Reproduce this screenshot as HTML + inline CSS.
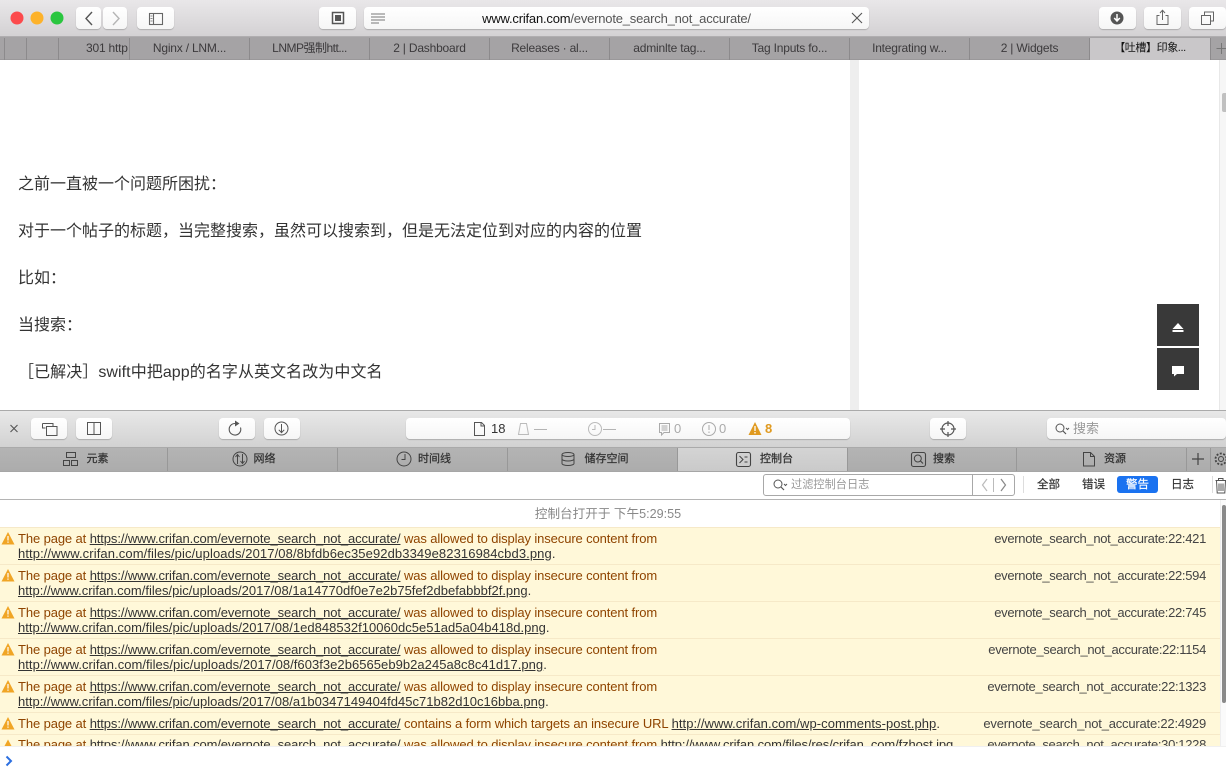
<!DOCTYPE html>
<html lang="zh">
<head>
<meta charset="utf-8">
<style>
html,body{margin:0;padding:0;width:1226px;height:776px;overflow:hidden;background:#fff}
body{position:relative;font-family:"Liberation Sans","Noto Sans CJK SC",sans-serif;color:#333}
div,span.a{position:absolute;box-sizing:border-box}
.btn{background:linear-gradient(#fff,#f6f6f6);border-radius:4px;box-shadow:0 1px 1px rgba(0,0,0,.2)}
.tab{top:38px;height:22px;border-right:1px solid #8c8a8c;text-align:center;font-size:12px;letter-spacing:-.2px;line-height:20px;color:#3c3a3c;white-space:nowrap;overflow:hidden}
.dt{top:448px;height:23px;border-right:1px solid #989898;text-align:center;font-size:11px;-webkit-text-stroke:.25px #333;line-height:23px;color:#333;white-space:nowrap}
.p{left:18px;font-size:16px;line-height:24px;color:#333;white-space:nowrap}
.row{left:0;width:1220px;background:#fff8d9;border-bottom:1px solid #f6e9c8}
.l{left:18px;font-size:13px;line-height:15px;color:#8f4400;white-space:nowrap;letter-spacing:-.11px}
.l u{color:#333}
.r{right:20px;left:auto;font-size:13px;line-height:15px;color:#444;white-space:nowrap;letter-spacing:-.31px}
.f{top:478px;font-size:11.5px;-webkit-text-stroke:.2px #333;line-height:15px;color:#333;white-space:nowrap}
</style>
</head>
<body>
<!-- title bar -->
<div style="left:0;top:0;width:1226px;height:37px;background:linear-gradient(#e9e7e9,#d3d1d3)"></div>
<div style="left:0;top:36px;width:1226px;height:1px;background:#b0aeb0"></div>
<div class="btn" style="left:76px;top:7px;width:25px;height:22px"></div>
<div class="btn" style="left:103px;top:7px;width:24px;height:22px"></div>
<div class="btn" style="left:137px;top:7px;width:37px;height:22px"></div>
<div class="btn" style="left:319px;top:7px;width:37px;height:22px"></div>
<div class="btn" style="left:364px;top:7px;width:505px;height:22px"></div>
<div class="btn" style="left:1099px;top:7px;width:37px;height:22px"></div>
<div class="btn" style="left:1144px;top:7px;width:37px;height:22px"></div>
<div class="btn" style="left:1189px;top:7px;width:37px;height:22px"></div>
<div style="left:364px;top:8px;width:505px;height:21px;text-align:center;font-size:13px;letter-spacing:-.2px;line-height:21px;color:#555;white-space:nowrap"><span style="color:#111">www.crifan.com</span>/evernote_search_not_accurate/</div>

<!-- tab strip -->
<div style="left:0;top:37px;width:1226px;height:23px;background:#a5a3a5;border-bottom:1px solid #9a989a"></div>
<div class="tab" style="left:0;width:5px"></div>
<div class="tab" style="left:5px;width:22px"></div>
<div class="tab" style="left:27px;width:32px"></div>
<div class="tab" style="left:59px;width:71px;text-align:left;padding-left:27px">301 http</div>
<div class="tab" style="left:130px;width:120px">Nginx / LNM...</div>
<div class="tab" style="left:250px;width:120px;letter-spacing:-.5px">LNMP强制htt...</div>
<div class="tab" style="left:370px;width:120px">2 | Dashboard</div>
<div class="tab" style="left:490px;width:120px">Releases · al...</div>
<div class="tab" style="left:610px;width:120px">adminlte tag...</div>
<div class="tab" style="left:730px;width:120px">Tag Inputs fo...</div>
<div class="tab" style="left:850px;width:120px">Integrating w...</div>
<div class="tab" style="left:970px;width:120px">2 | Widgets</div>
<div class="tab" style="left:1090px;width:121px;background:#c9c7c9;color:#111;font-size:11px;letter-spacing:-.4px">【吐槽】印象...</div>

<!-- page -->
<div style="left:850px;top:60px;width:9px;height:350px;background:#eeeeee"></div>
<div style="left:1219px;top:60px;width:7px;height:350px;background:#f6f6f6;border-left:1px solid #e8e8e8"></div>
<div style="left:1222px;top:93px;width:4px;height:19px;background:#c0c0c0;border-radius:2px 0 0 2px"></div>
<div class="p" style="top:173px">之前一直被一个问题所困扰：</div>
<div class="p" style="top:220px">对于一个帖子的标题，当完整搜索，虽然可以搜索到，但是无法定位到对应的内容的位置</div>
<div class="p" style="top:267px">比如：</div>
<div class="p" style="top:314px">当搜索：</div>
<div class="p" style="top:361px;left:18px;letter-spacing:.07px">［已解决］swift中把app的名字从英文名改为中文名</div>
<div style="left:1157px;top:304px;width:42px;height:42px;background:#393939"></div>
<div style="left:1157px;top:348px;width:42px;height:42px;background:#393939"></div>

<!-- devtools toolbar -->
<div style="left:0;top:410px;width:1226px;height:38px;background:linear-gradient(#e8e8e8,#d2d2d2);border-top:1px solid #aaa;border-bottom:1px solid #aaa"></div>
<div class="btn" style="left:31px;top:418px;width:36px;height:21px"></div>
<div class="btn" style="left:76px;top:418px;width:36px;height:21px"></div>
<div class="btn" style="left:219px;top:418px;width:36px;height:21px"></div>
<div class="btn" style="left:264px;top:418px;width:36px;height:21px"></div>
<div class="btn" style="left:406px;top:418px;width:444px;height:21px"></div>
<div class="btn" style="left:930px;top:418px;width:36px;height:21px"></div>
<div class="btn" style="left:1047px;top:418px;width:179px;height:21px"></div>
<div style="left:491px;top:421px;font-size:13px;line-height:16px;color:#333">18</div>
<div style="left:534px;top:421px;font-size:13px;line-height:16px;color:#aaa">—</div>
<div style="left:603px;top:421px;font-size:13px;line-height:16px;color:#aaa">—</div>
<div style="left:674px;top:421px;font-size:13px;line-height:16px;color:#aaa">0</div>
<div style="left:719px;top:421px;font-size:13px;line-height:16px;color:#aaa">0</div>
<div style="left:765px;top:421px;font-size:13px;line-height:16px;color:#e09a20;font-weight:bold">8</div>
<div style="left:1073px;top:420px;font-size:13px;line-height:17px;color:#999">搜索</div>

<!-- devtools tabs -->
<div style="left:0;top:448px;width:1226px;height:23px;background:linear-gradient(#b4b4b4,#acacac)"></div>
<div class="dt" style="left:0;width:168px;padding-left:28px">元素</div>
<div class="dt" style="left:168px;width:170px;padding-left:24px">网络</div>
<div class="dt" style="left:338px;width:170px;padding-left:24px">时间线</div>
<div class="dt" style="left:508px;width:170px;padding-left:28px">储存空间</div>
<div class="dt" style="left:678px;width:170px;background:linear-gradient(#d4d4d4,#cacaca);padding-left:28px">控制台</div>
<div class="dt" style="left:848px;width:169px;padding-left:24px">搜索</div>
<div class="dt" style="left:1017px;width:170px;padding-left:27px">资源</div>
<div class="dt" style="left:1187px;width:24px"></div>

<!-- filter bar -->
<div style="left:0;top:471px;width:1226px;height:29px;background:#fff;border-top:1px solid #a6a6a6;border-bottom:1px solid #b4b4b4"></div>
<div style="left:763px;top:474px;width:252px;height:22px;border:1px solid #a8a8a8;border-radius:3px;background:#fff"></div>
<div style="left:972px;top:474px;width:1px;height:22px;background:#a8a8a8"></div>
<div style="left:791px;top:478px;font-size:11.2px;line-height:15px;color:#999;white-space:nowrap">过滤控制台日志</div>
<div style="left:1023px;top:476px;width:1px;height:17px;background:#ddd"></div>
<div class="f" style="left:1037px">全部</div>
<div class="f" style="left:1082px">错误</div>
<div style="left:1117px;top:476px;width:41px;height:17px;background:#1a72f0;border-radius:3px"></div>
<div class="f" style="left:1126px;color:#fff;-webkit-text-stroke:.2px #fff">警告</div>
<div class="f" style="left:1171px">日志</div>
<div style="left:1212px;top:476px;width:1px;height:17px;background:#ddd"></div>

<!-- console -->
<div style="left:0;top:500px;width:1226px;height:27px;background:#fff;text-align:center;font-size:12.6px;line-height:28px;color:#888;white-space:nowrap"><span style="position:relative;left:-5px">控制台打开于 下午5:29:55</span></div>
<div style="left:0;top:527px;width:1220px;height:1px;background:#f6e9c8"></div>

<div class="row" style="top:528px;height:37px"></div>
<div class="row" style="top:565px;height:37px"></div>
<div class="row" style="top:602px;height:37px"></div>
<div class="row" style="top:639px;height:37px"></div>
<div class="row" style="top:676px;height:37px"></div>
<div class="row" style="top:713px;height:22px"></div>
<div class="row" style="top:735px;height:12px;border:0"></div>

<div class="l" style="top:531px">The page at <u>https://www.crifan.com/evernote_search_not_accurate/</u> was allowed to display insecure content from</div>
<div class="l" style="top:546px;letter-spacing:.1px"><u>http://www.crifan.com/files/pic/uploads/2017/08/8bfdb6ec35e92db3349e82316984cbd3.png</u><span style="color:#333">.</span></div>
<div class="r" style="top:531px">evernote_search_not_accurate:22:421</div>

<div class="l" style="top:568px">The page at <u>https://www.crifan.com/evernote_search_not_accurate/</u> was allowed to display insecure content from</div>
<div class="l" style="top:583px;letter-spacing:.01px"><u>http://www.crifan.com/files/pic/uploads/2017/08/1a14770df0e7e2b75fef2dbefabbbf2f.png</u><span style="color:#333">.</span></div>
<div class="r" style="top:568px">evernote_search_not_accurate:22:594</div>

<div class="l" style="top:605px">The page at <u>https://www.crifan.com/evernote_search_not_accurate/</u> was allowed to display insecure content from</div>
<div class="l" style="top:620px;letter-spacing:.02px"><u>http://www.crifan.com/files/pic/uploads/2017/08/1ed848532f10060dc5e51ad5a04b418d.png</u><span style="color:#333">.</span></div>
<div class="r" style="top:605px">evernote_search_not_accurate:22:745</div>

<div class="l" style="top:642px">The page at <u>https://www.crifan.com/evernote_search_not_accurate/</u> was allowed to display insecure content from</div>
<div class="l" style="top:657px;letter-spacing:.04px"><u>http://www.crifan.com/files/pic/uploads/2017/08/f603f3e2b6565eb9b2a245a8c8c41d17.png</u><span style="color:#333">.</span></div>
<div class="r" style="top:642px">evernote_search_not_accurate:22:1154</div>

<div class="l" style="top:679px">The page at <u>https://www.crifan.com/evernote_search_not_accurate/</u> was allowed to display insecure content from</div>
<div class="l" style="top:694px;letter-spacing:.02px"><u>http://www.crifan.com/files/pic/uploads/2017/08/a1b0347149404fd45c71b82d10c16bba.png</u><span style="color:#333">.</span></div>
<div class="r" style="top:679px">evernote_search_not_accurate:22:1323</div>

<div class="l" style="top:716px">The page at <u>https://www.crifan.com/evernote_search_not_accurate/</u> contains a form which targets an insecure URL <u style="letter-spacing:.06px">http://www.crifan.com/wp-comments-post.php</u><span style="color:#333">.</span></div>
<div class="r" style="top:716px;letter-spacing:-.2px">evernote_search_not_accurate:22:4929</div>

<div class="l" style="top:737px">The page at <u>https://www.crifan.com/evernote_search_not_accurate/</u> was allowed to display insecure content from <span style="color:#333">http://www.crifan.com/files/res/crifan_com/fzhost.jpg</span></div>
<div class="r" style="top:737px">evernote_search_not_accurate:30:1228</div>

<!-- prompt -->
<div style="left:0;top:746px;width:1226px;height:30px;background:#fff;border-top:1px solid #f0f0f0"></div>
<div style="left:1220px;top:500px;width:6px;height:246px;background:#fafafa;border-left:1px solid #eee"></div>
<div style="left:1222px;top:505px;width:4px;height:198px;background:#8a8a8a;border-radius:2px"></div>

<!-- icons -->
<svg style="position:absolute;left:0;top:0" width="1226" height="776" viewBox="0 0 1226 776" fill="none">
  <circle cx="17" cy="18" r="6.500" fill="#fc4a4c"/>
  <circle cx="37" cy="18" r="6.500" fill="#fdb22a"/>
  <circle cx="57" cy="18" r="6.500" fill="#2ac63f"/>
  <path d="M92 12l-6 6.500 6 6.500" stroke="#555" stroke-width="1.400"/>
  <path d="M113 12l6 6.500-6 6.500" stroke="#b5b5b5" stroke-width="1.400"/>
  <g stroke="#666" stroke-width="1.100">
    <rect x="149.500" y="13.500" width="13" height="11"/>
    <path d="M153.500 13.500v11" stroke-width="1.100"/>
    <path d="M150.500 16h2M150.500 18.500h2M150.500 21h2" stroke-width=".8"/>
  </g>
  <rect x="332.500" y="12.500" width="11" height="11" stroke="#555" stroke-width="1.500"/>
  <rect x="335" y="15" width="6" height="6" fill="#555"/>
  <path d="M371 14h14M371 17h14M371 20h14M371 23h8" stroke="#777"/>
  <path d="M852 13l10 10M862 13l-10 10" stroke="#555" stroke-width="1.100"/>
  <circle cx="1117" cy="18" r="6.500" fill="#555"/>
  <path d="M1117 14v6M1114.200 18l2.800 3 2.800-3" stroke="#fff" stroke-width="1.500"/>
  <path d="M1159.500 15.500h-2.500v9h11v-9h-2.500M1162.500 20V10.500M1160 13l2.500-2.800 2.500 2.800" stroke="#666"/>
  <path d="M1201.500 15.500h9v9h-9zM1204.500 15.500v-3.500h9v9h-3" stroke="#666"/>
  <path d="M1216.500 48.500h10M1221.500 43v11" stroke="#777"/>

  <!-- page buttons -->
  <path d="M1172.500 329l5.500-6 5.500 6z" fill="#fff"/>
  <rect x="1172.500" y="330" width="11" height="2" fill="#fff"/>
  <path d="M1172 366h12v8h-7l-3 2.500v-2.500h-2z" fill="#fff"/>

  <!-- toolbar -->
  <path d="M10.500 425l7 7M17.500 425l-7 7" stroke="#555" stroke-width="1.100"/>
  <path d="M42.500 423.500h10.500v3M45.500 428h-3v-4.500" stroke="#555"/>
  <rect x="46.500" y="426.500" width="10.500" height="9" stroke="#555"/>
  <rect x="87.500" y="422.500" width="13" height="12" stroke="#555"/>
  <path d="M94 422.500v12" stroke="#555"/>
  <path d="M235 423.500a5.800 5.800 0 1 0 5.500 4" stroke="#555" stroke-width="1.100"/>
  <path d="M235 420.500l4.500 3-4.500 3z" fill="#555"/>
  <circle cx="281.500" cy="428.500" r="6.500" stroke="#555"/>
  <path d="M281.500 424v8.500M278.800 429.800l2.700 2.800 2.700-2.800" stroke="#555"/>
  <path d="M474.500 422.500h7l3 3v10h-10zM481 422.500v3.500h3.500" stroke="#555"/>
  <path d="M520.500 423.500h6l2 11h-10z" stroke="#bbb"/>
  <circle cx="595" cy="429" r="6.500" stroke="#bbb"/>
  <path d="M595 425v4.500h-3" stroke="#bbb"/>
  <path d="M659.500 423.500h10v9h-5.500l-2.500 2.500v-2.500h-2zM661.500 426h6M661.500 428h6M661.500 430h6" stroke="#aaa"/>
  <circle cx="709" cy="429" r="6.500" stroke="#aaa"/>
  <path d="M709 425v5M709 431.500v1.500" stroke="#aaa"/>
  <path d="M755 422l6.500 13h-13z" fill="#e09a20"/>
  <path d="M755 426v5M755 432v1.500" stroke="#fff" stroke-width="1.300"/>
  <circle cx="948" cy="429" r="6" stroke="#555" stroke-width="1.200"/>
  <path d="M948 421v5M948 432v5M940 429h5M951 429h5" stroke="#555" stroke-width="1.200"/>
  <circle cx="1060" cy="428" r="4" stroke="#555"/>
  <path d="M1063 431l3 3" stroke="#555" stroke-width="1.200"/>
  <path d="M1066 428l1.500 1.500 1.500-1.500" stroke="#555"/>

  <!-- devtools tab icons -->
  <g stroke="#444">
    <rect x="66.500" y="452.500" width="9" height="5"/>
    <rect x="63.500" y="460.500" width="6" height="5"/>
    <rect x="71.500" y="460.500" width="6" height="5"/>
    <circle cx="240" cy="459" r="7"/>
    <path d="M237.500 464v-9M235.500 457l2-2.500 2 2.500M242.500 454v9M240.500 461l2 2.500 2-2.500"/>
    <circle cx="404" cy="459" r="7"/>
    <path d="M405 454v5.500h-3.500"/>
    <ellipse cx="568" cy="454.500" rx="6" ry="2"/>
    <path d="M562 454.500v9c0 1 2.500 2 6 2s6-1 6-2v-9M562 459c0 1 2.500 2 6 2s6-1 6-2"/>
    <rect x="736.500" y="452.500" width="14" height="14" rx="2" stroke-width="1.100"/>
    <path d="M739.500 456l3.500 3.500-3.500 3.500M744.500 457h3M744.500 462h3"/>
    <rect x="911.500" y="452.500" width="14" height="14" rx="2" stroke-width="1.100"/>
    <circle cx="917.800" cy="458.500" r="3.500"/>
    <path d="M920.500 461l2.500 2.500" stroke-width="1.200"/>
    <path d="M1083.500 452.500h7l4 4v9.500h-11zM1090.500 452.500v4h4"/>
    <path d="M1192 459h12M1198 453v12" stroke-width="1.200"/>
    <circle cx="1221" cy="459" r="2.500"/>
    <circle cx="1221" cy="459" r="5.500" stroke-width="1.800" stroke-dasharray="2 1.500"/>
  </g>

  <!-- filter icons -->
  <circle cx="778" cy="484" r="4" stroke="#555"/>
  <path d="M781 487l3 3" stroke="#555" stroke-width="1.200"/>
  <path d="M784 484l1.500 1.500 1.500-1.500" stroke="#555"/>
  <path d="M987 479l-4.500 6 4.500 6" stroke="#bbb" stroke-width="1.200"/>
  <path d="M993.500 478v14" stroke="#bbb"/>
  <path d="M1001 479l4.500 6-4.500 6" stroke="#888" stroke-width="1.200"/>
  <path d="M1215.500 480.500h10.500M1218.500 480v-1.500h4.500v1.500M1216.500 480.500l.7 12.500h7.600l.7-12.500M1219 483.500v7.500M1221 483.500v7.500M1223 483.500v7.500" stroke="#555"/>

  <!-- warning icons -->
  <g>
    <path d="M8 532l6.500 12.500h-13z" fill="#f0a525"/><path d="M8 536v4.500M8 541.500v1.300" stroke="#fff" stroke-width="1.200"/>
    <path d="M8 569l6.500 12.500h-13z" fill="#f0a525"/><path d="M8 573v4.500M8 578.500v1.300" stroke="#fff" stroke-width="1.200"/>
    <path d="M8 606l6.500 12.500h-13z" fill="#f0a525"/><path d="M8 610v4.500M8 615.500v1.300" stroke="#fff" stroke-width="1.200"/>
    <path d="M8 643l6.500 12.500h-13z" fill="#f0a525"/><path d="M8 647v4.500M8 652.500v1.300" stroke="#fff" stroke-width="1.200"/>
    <path d="M8 680l6.500 12.500h-13z" fill="#f0a525"/><path d="M8 684v4.500M8 689.500v1.300" stroke="#fff" stroke-width="1.200"/>
    <path d="M8 717l6.500 12.500h-13z" fill="#f0a525"/><path d="M8 721v4.500M8 726.500v1.300" stroke="#fff" stroke-width="1.200"/>
    <path d="M8 739.500l3.500 6.500h-7z" fill="#f0a525"/>
  </g>
  <path d="M6.500 756.500l4.500 4.500-4.500 4.500" stroke="#2c6fe0" stroke-width="2"/>
</svg>
</body>
</html>
